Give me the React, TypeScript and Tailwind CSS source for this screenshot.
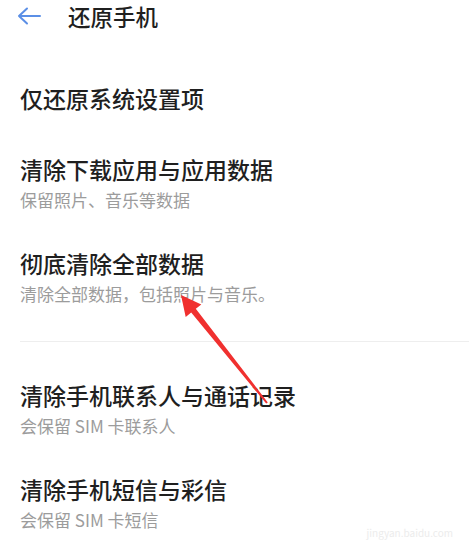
import React from 'react'

const font = { fontFamily: '"Noto Sans CJK SC", "Noto Sans", sans-serif' }

type Item = { title: string; sub?: string }

const groupA: Item[] = [
  { title: '清除下载应用与应用数据', sub: '保留照片、音乐等数据' },
  { title: '彻底清除全部数据', sub: '清除全部数据，包括照片与音乐。' },
]

const groupB: Item[] = [
  { title: '清除手机联系人与通话记录', sub: '会保留 SIM 卡联系人' },
  { title: '清除手机短信与彩信', sub: '会保留 SIM 卡短信' },
]

function Row({ item }: { item: Item }) {
  return (
    <div className="px-5 py-[17px]">
      <div className="text-[23px] font-medium leading-[32px] text-[#1f1f1f]">{item.title}</div>
      {item.sub && (
        <div className="mt-[2px] text-[17px] leading-[26px] text-[#9c9c9c]">{item.sub}</div>
      )}
    </div>
  )
}

export default function App() {
  return (
    <div className="relative w-[475px] h-[554px] overflow-hidden bg-white" style={font}>
      {/* Header */}
      <div className="flex h-8 items-center">
        <svg width="24" height="18" viewBox="0 0 24 18" className="ml-[17px]" fill="none">
          <path d="M10 1.5 2 9l8 7.5M2 9h21" stroke="#5b8fe6" strokeWidth="2" strokeLinecap="round" strokeLinejoin="round" />
        </svg>
        <span className="ml-[27px] text-[22.5px] font-medium leading-8 text-[#1f1f1f]">还原手机</span>
      </div>

      {/* Items */}
      <div className="px-5 pt-[50px] pb-[22px]">
        <div className="text-[23px] font-medium leading-[32px] text-[#1f1f1f]">仅还原系统设置项</div>
      </div>
      {groupA.map((item) => (
        <Row key={item.title} item={item} />
      ))}

      <div className="ml-5 mr-[6px] mt-[17px] mb-5 h-px bg-[#eeeeee]" />

      {groupB.map((item) => (
        <Row key={item.title} item={item} />
      ))}

      {/* Annotation arrow */}
      <svg className="absolute left-0 top-0 pointer-events-none" width="475" height="554" viewBox="0 0 475 554">
        <polygon
          points="181,295 201.3,304.5 195.8,308.8 267.8,402.4 266.2,403.6 191.2,312.6 185.7,316.9"
          fill="#f0302f"
        />
      </svg>

      {/* Watermark */}
      <div className="absolute right-[22px] bottom-[16px] text-[10px] leading-none text-[#ececec]">
        jingyan.baidu.com
      </div>
    </div>
  )
}
